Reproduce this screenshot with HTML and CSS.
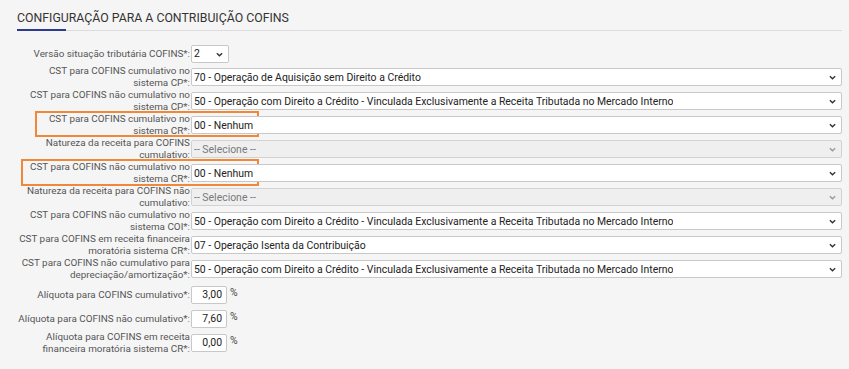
FILE: index.html
```html
<!DOCTYPE html>
<html lang="pt-BR">
<head>
<meta charset="utf-8">
<title>Configuração COFINS</title>
<link rel="stylesheet" href="styles.css">
</head>
<body>
<div class="panel">
  <div class="heading">
    <h2 class="heading-title">CONFIGURAÇÃO PARA A CONTRIBUIÇÃO COFINS</h2>
  </div>
  <div class="form">
    <div class="row row-first">
      <label class="lbl">Versão situação tributária COFINS*:</label>
      <div class="field">
        <div class="sel sel-small"><span class="val">2</span><svg class="chev" viewBox="0 0 8 5"><path d="M1 1L4 4L7 1"/></svg></div>
      </div>
    </div>
    <div class="row">
      <label class="lbl">CST para COFINS cumulativo no sistema CP*:</label>
      <div class="field">
        <div class="sel"><span class="val">70 - Operação de Aquisição sem Direito a Crédito</span><svg class="chev" viewBox="0 0 8 5"><path d="M1 1L4 4L7 1"/></svg></div>
      </div>
    </div>
    <div class="row">
      <label class="lbl">CST para COFINS não cumulativo no sistema CP*:</label>
      <div class="field">
        <div class="sel"><span class="val">50 - Operação com Direito a Crédito - Vinculada Exclusivamente a Receita Tributada no Mercado Interno</span><svg class="chev" viewBox="0 0 8 5"><path d="M1 1L4 4L7 1"/></svg></div>
      </div>
    </div>
    <div class="row">
      <span class="mark mark-1"></span>
      <label class="lbl">CST para COFINS cumulativo no sistema CR*:</label>
      <div class="field">
        <div class="sel"><span class="val">00 - Nenhum</span><svg class="chev" viewBox="0 0 8 5"><path d="M1 1L4 4L7 1"/></svg></div>
      </div>
    </div>
    <div class="row">
      <label class="lbl">Natureza da receita para COFINS cumulativo:</label>
      <div class="field">
        <div class="sel disabled"><span class="val">-- Selecione --</span><svg class="chev" viewBox="0 0 8 5"><path d="M1 1L4 4L7 1"/></svg></div>
      </div>
    </div>
    <div class="row">
      <span class="mark mark-2"></span>
      <label class="lbl">CST para COFINS não cumulativo no sistema CR*:</label>
      <div class="field">
        <div class="sel"><span class="val">00 - Nenhum</span><svg class="chev" viewBox="0 0 8 5"><path d="M1 1L4 4L7 1"/></svg></div>
      </div>
    </div>
    <div class="row">
      <label class="lbl">Natureza da receita para COFINS não cumulativo:</label>
      <div class="field">
        <div class="sel disabled"><span class="val">-- Selecione --</span><svg class="chev" viewBox="0 0 8 5"><path d="M1 1L4 4L7 1"/></svg></div>
      </div>
    </div>
    <div class="row">
      <label class="lbl">CST para COFINS não cumulativo no sistema COI*:</label>
      <div class="field">
        <div class="sel"><span class="val">50 - Operação com Direito a Crédito - Vinculada Exclusivamente a Receita Tributada no Mercado Interno</span><svg class="chev" viewBox="0 0 8 5"><path d="M1 1L4 4L7 1"/></svg></div>
      </div>
    </div>
    <div class="row">
      <label class="lbl">CST para COFINS em receita financeira moratória sistema CR*:</label>
      <div class="field">
        <div class="sel"><span class="val">07 - Operação Isenta da Contribuição</span><svg class="chev" viewBox="0 0 8 5"><path d="M1 1L4 4L7 1"/></svg></div>
      </div>
    </div>
    <div class="row">
      <label class="lbl">CST para COFINS não cumulativo para depreciação/amortização*:</label>
      <div class="field">
        <div class="sel"><span class="val">50 - Operação com Direito a Crédito - Vinculada Exclusivamente a Receita Tributada no Mercado Interno</span><svg class="chev" viewBox="0 0 8 5"><path d="M1 1L4 4L7 1"/></svg></div>
      </div>
    </div>
    <div class="row row-num row-num-first">
      <label class="lbl">Alíquota para COFINS cumulativo*:</label>
      <div class="field field-num"><span class="num">3,00</span><span class="pct">%</span></div>
    </div>
    <div class="row row-num">
      <label class="lbl">Alíquota para COFINS não cumulativo*:</label>
      <div class="field field-num"><span class="num">7,60</span><span class="pct">%</span></div>
    </div>
    <div class="row row-num">
      <label class="lbl">Alíquota para COFINS em receita financeira moratória sistema CR*:</label>
      <div class="field field-num"><span class="num">0,00</span><span class="pct">%</span></div>
    </div>
  </div>
</div>
</body>
</html>
```

FILE: styles.css
```css
html, body {
  margin: 0;
  padding: 0;
  background: #f5f5f5;
}
body {
  font-family: Roboto, "Liberation Sans", sans-serif;
  color: #333;
}
.panel {
  padding: 0 7px 0 17px;
}
.heading {
  padding-top: 11px;
  border-bottom: 1px solid #dcdcdc;
  position: relative;
}
.heading::after {
  content: "";
  position: absolute;
  left: 0;
  bottom: -1px;
  width: 49px;
  height: 2px;
  background: #2e3a8c;
}
.heading-title {
  margin: 0;
  font-size: 12.3px;
  font-weight: 400;
  color: #333;
  line-height: 15px;
  padding-bottom: 4px;
}
.form {
  padding-top: 11px;
  display: flex;
  flex-direction: column;
}
.row {
  display: flex;
  align-items: center;
  min-height: 24px;
  position: relative;
}
.row-first {
  min-height: 23px;
}
.row-num-first {
  margin-top: 2px;
}
.lbl {
  width: 173px;
  padding-right: 1px;
  text-align: right;
  font-size: 9.9px;
  line-height: 12px;
  color: #555;
  flex: none;
}
.field {
  flex: 1;
  display: flex;
  align-items: center;
}
.sel {
  position: relative;
  flex: 1;
  height: 18px;
  box-sizing: border-box;
  border: 1px solid #c8c8c8;
  border-radius: 2px;
  background: #fff;
  display: flex;
  align-items: center;
  padding-left: 2px;
  font-size: 10.45px;
  color: #222;
}
.sel-small {
  flex: none;
  width: 38px;
}
.sel.disabled {
  background: #efefef;
  color: #7a7a7a;
  border-color: #d2d2d2;
}
.val {
  white-space: nowrap;
  overflow: hidden;
}
.chev {
  position: absolute;
  right: 5px;
  top: 6px;
  width: 7px;
  height: 5px;
  fill: none;
  stroke: #333;
  stroke-width: 1.6;
}
.sel.disabled .chev {
  stroke: #999;
}
.field-num {
  flex: none;
}
.num {
  width: 36px;
  height: 18px;
  box-sizing: border-box;
  border: 1px solid #c8c8c8;
  border-radius: 2px;
  background: #fff;
  font-size: 10.45px;
  color: #222;
  text-align: right;
  padding-right: 4px;
  line-height: 16px;
}
.pct {
  margin-left: 3px;
  font-size: 10.45px;
  color: #444;
  align-self: flex-start;
}
.mark {
  position: absolute;
  border: 2px solid #f0883a;
  box-sizing: border-box;
  pointer-events: none;
}
.mark-1 {
  left: 18px;
  top: -2px;
  width: 224px;
  height: 26px;
}
.mark-2 {
  left: 4px;
  top: -2px;
  width: 238px;
  height: 27px;
}
```
